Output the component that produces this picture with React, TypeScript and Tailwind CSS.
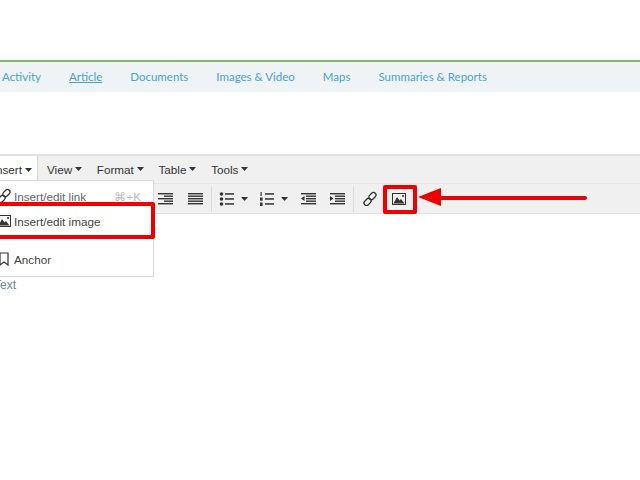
import React from 'react';

const navItems = ['Activity', 'Article', 'Documents', 'Images & Video', 'Maps', 'Summaries & Reports'];
const menuItems = ['View', 'Format', 'Table', 'Tools'];

const Caret = () => (
  <svg width="7" height="4" viewBox="0 0 7 4" className="ml-[3px] shrink-0">
    <path d="M0 0h7L3.5 4z" fill="#333" />
  </svg>
);

// horizontal rules used by the align / indent icons
const Lines = ({ rows }: { rows: [number, number][] }) => (
  <svg width="16" height="16" viewBox="0 0 16 16" className="shrink-0">
    {rows.map(([x, y], i) => (
      <rect key={i} x={x} y={y} width={16 - x} height="1.4" fill="#333" />
    ))}
  </svg>
);

const AlignRight = () => <Lines rows={[[1, 2], [7, 4.5], [1, 7], [7, 9.5], [1, 12]]} />;
const Justify = () => <Lines rows={[[1, 2], [1, 4.5], [1, 7], [1, 9.5], [1, 12]]} />;

const BulletList = () => (
  <svg width="16" height="16" viewBox="0 0 16 16" className="shrink-0">
    {[3, 8, 13].map((y) => (
      <g key={y} fill="#333">
        <circle cx="2.5" cy={y} r="1.8" />
        <rect x="6" y={y - 0.8} width="9" height="1.5" />
      </g>
    ))}
  </svg>
);

const NumList = () => (
  <svg width="16" height="16" viewBox="0 0 16 16" className="shrink-0">
    <g fill="#333">
      <rect x="1.5" y="1" width="1.2" height="4" />
      <rect x="1" y="6.5" width="2.6" height="3.2" />
      <rect x="1" y="11.5" width="2.6" height="3.5" />
      <rect x="6" y="2.2" width="9" height="1.5" />
      <rect x="6" y="7.2" width="9" height="1.5" />
      <rect x="6" y="12.2" width="9" height="1.5" />
    </g>
  </svg>
);

const Outdent = () => (
  <svg width="16" height="16" viewBox="0 0 16 16" className="shrink-0">
    <g fill="#333">
      <rect x="1" y="2" width="15" height="1.4" />
      <rect x="6" y="4.5" width="10" height="1.4" />
      <rect x="6" y="7" width="10" height="1.4" />
      <rect x="6" y="9.5" width="10" height="1.4" />
      <rect x="1" y="12" width="15" height="1.4" />
      <path d="M4.5 5v5L1 7.5z" />
    </g>
  </svg>
);

const Indent = () => (
  <svg width="16" height="16" viewBox="0 0 16 16" className="shrink-0">
    <g fill="#333">
      <rect x="1" y="2" width="15" height="1.4" />
      <rect x="6" y="4.5" width="10" height="1.4" />
      <rect x="6" y="7" width="10" height="1.4" />
      <rect x="6" y="9.5" width="10" height="1.4" />
      <rect x="1" y="12" width="15" height="1.4" />
      <path d="M1 5v5l3.5-2.5z" />
    </g>
  </svg>
);

const LinkIcon = () => (
  <svg width="16" height="16" viewBox="0 0 16 16" className="shrink-0" fill="none" stroke="#333" strokeWidth="1.3">
    <rect x="6.4" y="2.6" width="8" height="5" rx="2.5" transform="rotate(-45 10.4 5.1)" />
    <rect x="1.6" y="8.4" width="8" height="5" rx="2.5" transform="rotate(-45 5.6 10.9)" />
  </svg>
);

const ImageIcon = () => (
  <svg width="14" height="12" viewBox="0 0 14 12" className="shrink-0">
    <rect x="0.5" y="0.5" width="13" height="11" fill="none" stroke="#333" />
    <path d="M1.5 10.5L5 4l2.5 3.5L9 6l3.5 4.5z" fill="#333" />
    <circle cx="11" cy="3" r="1" fill="#333" />
  </svg>
);

const Divider = () => <div className="w-px h-[26px] bg-[#dddddd] shrink-0" />;

export default function App() {
  return (
    <div className="relative w-[640px] h-[480px] overflow-hidden bg-white font-['Liberation_Sans',sans-serif]">
      <div className="h-[60px]" />
      <div className="h-[2px] bg-[#8ab765]" />

      {/* tabs */}
      <nav className="h-[30px] bg-[#eff3f5] flex items-center gap-[28px] pl-[2px] font-['Lato',sans-serif] text-[11.5px] text-[#46a3d3]">
        {navItems.map((item) => (
          <span key={item} className={item === 'Article' ? 'underline' : ''}>
            {item}
          </span>
        ))}
      </nav>

      <div className="h-[62px]" />

      {/* editor */}
      <div className="border-t-2 border-[#e2e2e2] bg-[#f0f0f0]">
        <div className="h-[28px] flex items-center border-b border-[#e6e6e6] text-[11.7px] text-[#333]">
          <div className="w-[38px] h-full bg-white border-r border-[#d9d9d9] flex items-center justify-end pr-[5px] shrink-0">
            <span className="whitespace-nowrap">Insert</span>
            <Caret />
          </div>
          <div className="flex items-center gap-[14.7px] ml-[9px]">
            {menuItems.map((item) => (
              <span key={item} className="flex items-center">
                {item}
                <Caret />
              </span>
            ))}
          </div>
        </div>
        <div className="h-[30px] flex items-center pl-[157px] border-b border-[#e2e2e2]">
          <AlignRight />
          <div className="w-[14px]" />
          <Justify />
          <div className="w-[8px]" />
          <Divider />
          <div className="w-[7px]" />
          <BulletList />
          <div className="w-[3px]" />
          <Caret />
          <div className="w-[11px]" />
          <NumList />
          <div className="w-[3px]" />
          <Caret />
          <div className="w-[12px]" />
          <Outdent />
          <div className="w-[13px]" />
          <Indent />
          <div className="w-[8px]" />
          <Divider />
          <div className="w-[8px]" />
          <LinkIcon />
          <div className="w-[14px]" />
          <ImageIcon />
        </div>
      </div>

      {/* body text under the menu */}
      <div className="pt-[64px] -ml-[6px] text-[12px] leading-[14px] text-[#6d8797]">Text</div>

      {/* Insert dropdown */}
      <div className="absolute left-[-2px] top-[180px] w-[156px] h-[97px] bg-white border border-[#d9d9d9] text-[11.7px] text-[#444]">
        <div className="absolute left-[-3px] top-[7px]">
          <LinkIcon />
        </div>
        <span className="absolute left-[15px] top-[7px] text-[#666]">Insert/edit link</span>
        <span className="absolute right-[12px] top-[7px] text-[#bbbbbb]">⌘+K</span>
        <div className="absolute left-[-2px] top-[34px]">
          <ImageIcon />
        </div>
        <span className="absolute left-[15px] top-[32px]">Insert/edit image</span>
        <svg width="10" height="14" viewBox="0 0 10 14" className="absolute left-[0px] top-[71px]">
          <path d="M1 1h8v12L5 10l-4 3z" fill="none" stroke="#333" strokeWidth="1.2" />
        </svg>
        <span className="absolute left-[15px] top-[70px]">Anchor</span>
      </div>

      {/* annotations */}
      <div className="absolute left-[-8px] top-[202px] w-[163px] h-[37px] border-4 border-[#ee0000] rounded-[2px]" />
      <div className="absolute left-[383px] top-[185px] w-[34px] h-[29px] border-4 border-[#ee0000] rounded-[2px]" />
      <svg width="172" height="20" viewBox="0 0 172 20" className="absolute left-[417px] top-[188px]">
        <path d="M1 9L24 0v18z" fill="#ee0000" />
        <path d="M20 10H168" stroke="#ee0000" strokeWidth="4" strokeLinecap="round" />
      </svg>
    </div>
  );
}
